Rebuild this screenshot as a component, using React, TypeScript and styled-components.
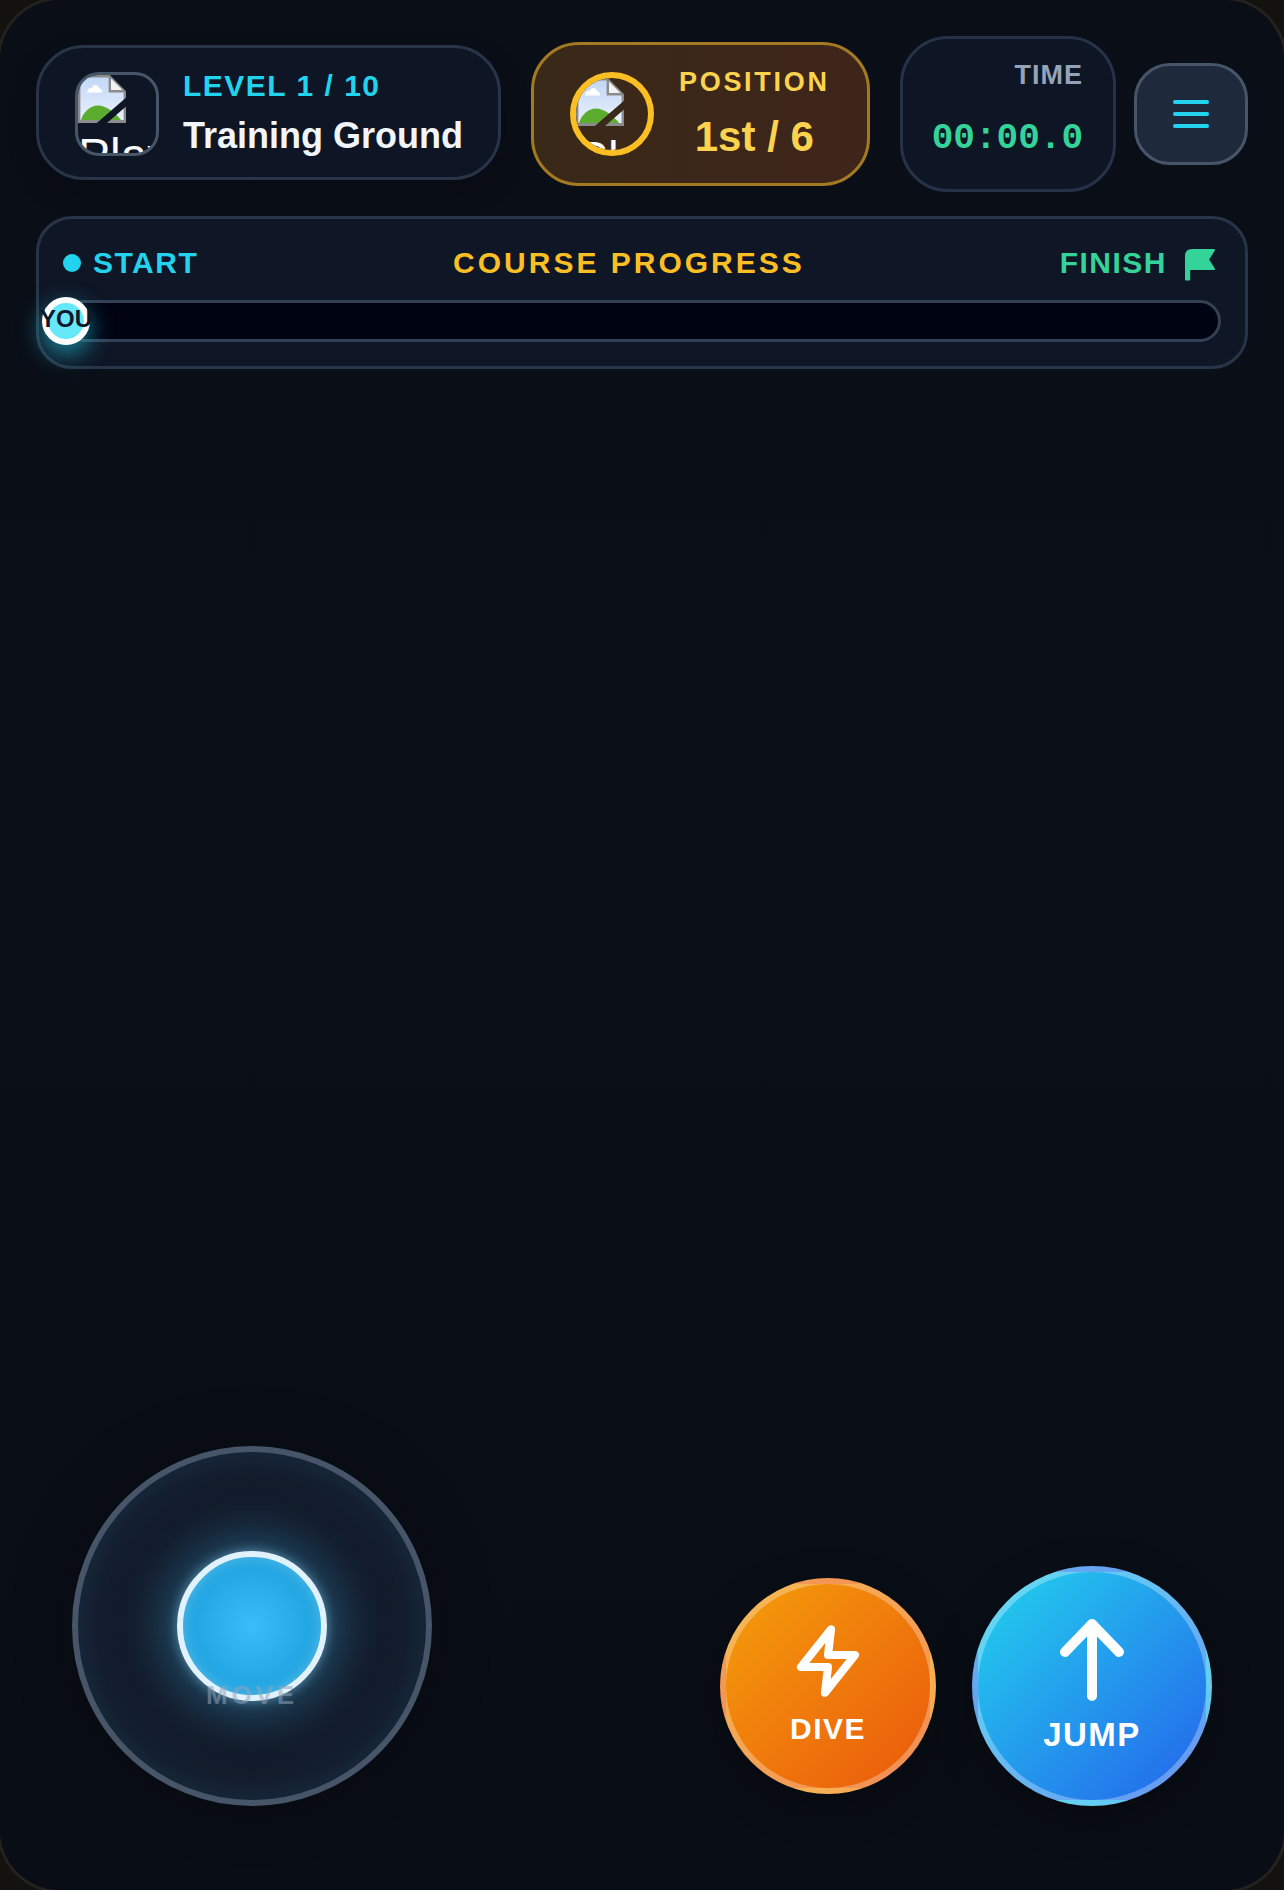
import React from "react";
import styled, { createGlobalStyle } from "styled-components";

const Global = createGlobalStyle`
  html, body { margin: 0; padding: 0; background: #13120f; overflow: hidden; }
  * { box-sizing: border-box; }
`;

const Frame = styled.div`
  width: 1284px;
  height: 1890px;
  display: flex;
  flex-direction: column;
  overflow: hidden;
  border-radius: 60px;
  box-shadow: 0 0 0 3px #23221f;
  background: linear-gradient(180deg, #0a0e17 0%, #0a0f18 50%, #090d15 100%);
  font-family: "Liberation Sans", Arial, sans-serif;
`;

const Hud = styled.header`
  display: flex;
  align-items: center;
  gap: 18px;
  padding: 36px 36px 0;
`;

const HudGroup = styled.div`
  display: flex;
  align-items: center;
  gap: 30px;
`;

const LevelCard = styled.section`
  display: flex;
  align-items: center;
  gap: 24px;
  width: 465px;
  height: 135px;
  margin-bottom: 3px;
  padding: 0 36px;
  border: 3px solid #283548;
  border-radius: 48px;
  background: #0e1525;
  box-shadow: 0 12px 30px rgba(0, 0, 0, 0.2);
`;

const PositionCard = styled.section`
  display: flex;
  align-items: center;
  gap: 25px;
  width: 339px;
  height: 144px;
  padding: 0 36px;
  border: 3px solid #a37a22;
  border-radius: 48px;
  background: linear-gradient(90deg, #392918, #3e251a);
`;

const Avatar = styled.div<{ $round?: boolean }>`
  flex: none;
  width: 84px;
  height: 84px;
  overflow: hidden;
  color: #f8fafc;
  margin-top: ${(p) => (p.$round ? "0" : "3px")};
  border-radius: ${(p) => (p.$round ? "50%" : "24px")};
  border: ${(p) => (p.$round ? "6px solid #fbbf24" : "3px solid #475569")};
`;

const AltText = styled.span`
  display: block;
  margin-top: 5px;
  font-size: 48px;
  line-height: 55px;
  white-space: nowrap;
`;

const BrokenIcon = styled.svg`
  display: block;
  width: 48px;
  height: 48px;
`;

const Stack = styled.div<{ $center?: boolean; $gap: number; $lift?: number }>`
  display: flex;
  flex-direction: column;
  align-items: ${(p) => (p.$center ? "center" : "flex-start")};
  gap: ${(p) => p.$gap}px;
  padding-bottom: ${(p) => p.$lift ?? 0}px;
`;

const LevelLabel = styled.div`
  color: #22d3ee;
  font-size: 30px;
  line-height: 34px;
  font-weight: 700;
  letter-spacing: 1.5px;
  white-space: nowrap;
`;

const LevelName = styled.div`
  color: #f1f5f9;
  font-size: 36px;
  line-height: 42px;
  font-weight: 700;
  white-space: nowrap;
`;

const PositionLabel = styled.div`
  color: #fcd34d;
  font-size: 27px;
  line-height: 32px;
  font-weight: 700;
  letter-spacing: 2.7px;
`;

const PositionValue = styled.div`
  color: #fcd34d;
  font-size: 42px;
  line-height: 48px;
  font-weight: 700;
`;

const TimeCard = styled.section`
  display: flex;
  flex-direction: column;
  align-items: flex-end;
  gap: 27px;
  width: 216px;
  height: 156px;
  padding: 20px 30px 0;
  border: 3px solid #253248;
  border-radius: 48px;
  background: #0e1525;
`;

const TimeLabel = styled.div`
  color: #94a3b8;
  font-size: 27px;
  line-height: 32px;
  font-weight: 700;
  letter-spacing: 1px;
`;

const TimeValue = styled.div`
  color: #34d399;
  font-family: "Liberation Mono", "Courier New", monospace;
  font-size: 36px;
  line-height: 42px;
  font-weight: 700;
`;

const MenuButton = styled.button`
  flex: none;
  display: flex;
  flex-direction: column;
  align-items: center;
  justify-content: center;
  gap: 8px;
  width: 114px;
  height: 102px;
  padding: 0;
  border: 3px solid #475569;
  border-radius: 36px;
  background: #1e293b;
`;

const MenuLine = styled.span`
  width: 36px;
  height: 4px;
  border-radius: 2px;
  background: #22d3ee;
`;

const ProgressCard = styled.section`
  margin: 24px 36px 0;
  height: 153px;
  padding: 24px 24px 0;
  border: 3px solid #283548;
  border-radius: 36px;
  background: #0f1625;
`;

const ProgressHeader = styled.div`
  display: flex;
  align-items: center;
  justify-content: space-between;
  height: 40px;
  margin-bottom: 17px;
  padding-right: 6px;
`;

const Endpoint = styled.div<{ $color: string }>`
  display: flex;
  align-items: center;
  gap: 12px;
  color: ${(p) => p.$color};
  font-size: 30px;
  font-weight: 700;
  letter-spacing: 1.5px;
`;

const Dot = styled.span`
  width: 18px;
  height: 18px;
  border-radius: 50%;
  background: #22d3ee;
`;

const CourseTitle = styled.div`
  color: #fbbf24;
  font-size: 30px;
  font-weight: 700;
  letter-spacing: 3px;
`;

const FlagIcon = styled.svg`
  width: 30px;
  height: 32px;
  margin-left: 6px;
  margin-top: 4px;
`;

const Track = styled.div`
  position: relative;
  height: 42px;
  border: 3px solid #334155;
  border-radius: 21px;
  background: #000311;
`;

const Marker = styled.div`
  position: absolute;
  left: 0;
  top: 50%;
  transform: translate(-50%, -50%);
  display: flex;
  align-items: center;
  justify-content: center;
  width: 48px;
  height: 48px;
  padding-bottom: 4px;
  border: 6px solid #ffffff;
  border-radius: 50%;
  background: #67e8f9;
  color: #0f172a;
  font-size: 24px;
  font-weight: 700;
  white-space: nowrap;
  box-shadow: 0 9px 24px rgba(34, 211, 238, 0.6);
`;

const Controls = styled.footer`
  margin-top: auto;
  display: flex;
  align-items: flex-end;
  justify-content: space-between;
  padding: 0 72px 84px;
`;

const Joystick = styled.div`
  position: relative;
  display: flex;
  align-items: center;
  justify-content: center;
  width: 360px;
  height: 360px;
  border: 6px solid #475569;
  border-radius: 50%;
  background: #131826;
  box-shadow: inset 0 0 60px rgba(56, 189, 248, 0.16), 0 0 60px rgba(0, 0, 0, 0.25);
`;

const Knob = styled.div`
  width: 150px;
  height: 150px;
  border: 6px solid #e0f2fe;
  border-radius: 50%;
  background: radial-gradient(circle, #38bdf8 0%, #1fa3e0 70%, #1fa3e0 100%);
  box-shadow: 0 0 72px rgba(56, 189, 248, 0.6), 0 0 12px rgba(186, 230, 253, 0.5),
    inset 0 0 14px rgba(255, 255, 255, 0.28);
`;

const MoveLabel = styled.span`
  position: absolute;
  left: 0;
  right: 0;
  bottom: 90px;
  text-align: center;
  color: rgba(148, 163, 184, 0.55);
  font-size: 26px;
  line-height: 30px;
  font-weight: 700;
  letter-spacing: 3.9px;
`;

const Actions = styled.div`
  display: flex;
  align-items: center;
  gap: 36px;
`;

const ActionButton = styled.button<{ $size: number; $from: string; $to: string; $font: number }>`
  display: flex;
  flex-direction: column;
  align-items: center;
  justify-content: center;
  gap: 15px;
  width: ${(p) => p.$size}px;
  height: ${(p) => p.$size}px;
  padding: 0;
  border: 6px solid rgba(255, 255, 255, 0.3);
  border-radius: 50%;
  background: linear-gradient(135deg, ${(p) => p.$from}, ${(p) => p.$to});
  box-shadow: 0 12px 40px rgba(0, 0, 0, 0.3);
  color: #ffffff;
  font-family: "Liberation Sans", Arial, sans-serif;
  font-size: ${(p) => p.$font}px;
  line-height: 1.15;
  font-weight: 700;
  letter-spacing: 1.5px;
`;

const BrokenImage = ({ id, tear }: { id: string; tear: string }) => (
  <BrokenIcon viewBox="0 0 16 16" aria-hidden="true">
    <defs>
      <linearGradient id={id} x1="0" y1="0" x2="0" y2="1">
        <stop offset="0" stopColor="#c2d7f7" />
        <stop offset="1" stopColor="#eaf1fd" />
      </linearGradient>
    </defs>
    <path d="M0 0H10.6L16 5.4V16H0Z" fill="#8b8b8b" />
    <path d="M.8 .8H10.2V5.8H15.2V15H.8Z" fill={`url(#${id})`} />
    <path d="M11 1.2 14.8 5H11Z" fill="#f2f2f2" />
    <path d="M3 5.8C3 4.6 4 4.2 4.6 4.4 5 3 6.6 3 7 4.4 7.8 4.4 8 5.2 8 5.8Z" fill="#ffffff" />
    <path d="M1 15C1.8 12.4 4 10.2 6.6 10.2 9.4 10.2 12 12.4 14.4 15Z" fill="#5cad2f" />
    <path d="M6.8 17 17.2 8" stroke={tear} strokeWidth="2.2" fill="none" />
  </BrokenIcon>
);

export default function App() {
  return (
    <>
      <Global />
      <Frame>
        <Hud>
          <HudGroup>
            <LevelCard>
              <Avatar>
                <BrokenImage id="sky-a" tear="#0e1525" />
                <AltText>Player</AltText>
              </Avatar>
              <Stack $gap={12}>
                <LevelLabel>LEVEL 1 / 10</LevelLabel>
                <LevelName>Training Ground</LevelName>
              </Stack>
            </LevelCard>
            <PositionCard>
              <Avatar $round>
                <BrokenImage id="sky-b" tear="#392918" />
                <AltText>Player</AltText>
              </Avatar>
              <Stack $center $gap={15} $lift={2}>
                <PositionLabel>POSITION</PositionLabel>
                <PositionValue>1st / 6</PositionValue>
              </Stack>
            </PositionCard>
            <TimeCard>
              <TimeLabel>TIME</TimeLabel>
              <TimeValue>00:00.0</TimeValue>
            </TimeCard>
          </HudGroup>
          <MenuButton aria-label="Menu">
            <MenuLine />
            <MenuLine />
            <MenuLine />
          </MenuButton>
        </Hud>

        <ProgressCard>
          <ProgressHeader>
            <Endpoint $color="#22d3ee">
              <Dot />
              START
            </Endpoint>
            <CourseTitle>COURSE PROGRESS</CourseTitle>
            <Endpoint $color="#34d399">
              FINISH
              <FlagIcon viewBox="0 0 30 32" aria-hidden="true">
                <path
                  d="M1 7Q1 1 7 1H29L23 10.5 29 20H4.2V30.5H1Z"
                  fill="#34d399"
                  stroke="#34d399"
                  strokeWidth="2"
                  strokeLinejoin="round"
                />
              </FlagIcon>
            </Endpoint>
          </ProgressHeader>
          <Track>
            <Marker>YOU</Marker>
          </Track>
        </ProgressCard>

        <Controls>
          <Joystick>
            <Knob />
            <MoveLabel>MOVE</MoveLabel>
          </Joystick>
          <Actions>
            <ActionButton $size={216} $from="#f59e0b" $to="#ea580c" $font={30}>
              <svg width="72" height="72" viewBox="0 0 24 24" fill="none" stroke="#fff" strokeWidth="2.7" strokeLinecap="round" strokeLinejoin="round" aria-hidden="true">
                <path d="M13 1.4 3 14h9l-1 8.6L21 10h-9z" />
              </svg>
              DIVE
            </ActionButton>
            <ActionButton $size={240} $from="#22d3ee" $to="#2563eb" $font={33}>
              <svg width="64" height="82" viewBox="0 0 64 82" fill="none" stroke="#fff" strokeWidth="10" strokeLinecap="round" strokeLinejoin="round" aria-hidden="true">
                <path d="M32 77V5M5 33 32 5 59 33" />
              </svg>
              JUMP
            </ActionButton>
          </Actions>
        </Controls>
      </Frame>
    </>
  );
}
